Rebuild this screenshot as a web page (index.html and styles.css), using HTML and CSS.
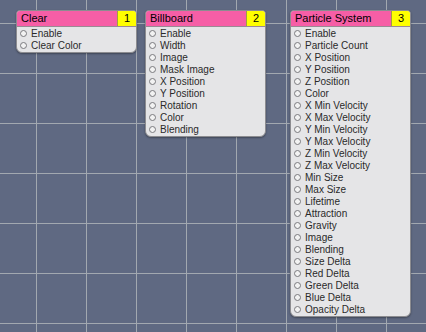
FILE: index.html
```html
<!DOCTYPE html>
<html lang="en">

<head>
    <meta charset="UTF-8">
    <meta name="viewport" content="width=device-width, initial-scale=1.0">
    <title>Patch Editor</title>
    <link rel="stylesheet" href="styles.css">
</head>

<body>
    <div class="canvas">
        <!-- Clear -->
        <div class="node node-clear">
            <div class="node-header">
                <span class="node-title">Clear</span>
                <span class="node-layer">1</span>
            </div>
            <ul class="ports">
                <li>Enable</li>
                <li>Clear Color</li>
            </ul>
        </div>

        <!-- Billboard -->
        <div class="node node-billboard">
            <div class="node-header">
                <span class="node-title">Billboard</span>
                <span class="node-layer">2</span>
            </div>
            <ul class="ports">
                <li>Enable</li>
                <li>Width</li>
                <li>Image</li>
                <li>Mask Image</li>
                <li>X Position</li>
                <li>Y Position</li>
                <li>Rotation</li>
                <li>Color</li>
                <li>Blending</li>
            </ul>
        </div>

        <!-- Particle System -->
        <div class="node node-particles">
            <div class="node-header">
                <span class="node-title">Particle System</span>
                <span class="node-layer">3</span>
            </div>
            <ul class="ports">
                <li>Enable</li>
                <li>Particle Count</li>
                <li>X Position</li>
                <li>Y Position</li>
                <li>Z Position</li>
                <li>Color</li>
                <li>X Min Velocity</li>
                <li>X Max Velocity</li>
                <li>Y Min Velocity</li>
                <li>Y Max Velocity</li>
                <li>Z Min Velocity</li>
                <li>Z Max Velocity</li>
                <li>Min Size</li>
                <li>Max Size</li>
                <li>Lifetime</li>
                <li>Attraction</li>
                <li>Gravity</li>
                <li>Image</li>
                <li>Blending</li>
                <li>Size Delta</li>
                <li>Red Delta</li>
                <li>Green Delta</li>
                <li>Blue Delta</li>
                <li>Opacity Delta</li>
            </ul>
        </div>
    </div>
</body>

</html>
```

FILE: styles.css
```css
body {
    margin: 0;
    padding: 0;
    font-family: "Liberation Sans", Arial, sans-serif;
}

.canvas {
    position: relative;
    width: 426px;
    height: 332px;
    overflow: hidden;
    background-color: #5f6982;
    background-image:
        linear-gradient(to right, #a2a8b0 1px, transparent 1px),
        linear-gradient(to bottom, #a2a8b0 1px, transparent 1px);
    background-size: 50px 50px;
    background-position: 36px 23px;
}

/* nodes sit on the free canvas */
.node {
    position: absolute;
    top: 10px;
    width: 119px;
    background-color: #e5e5e7;
    border: 1px solid #8c8c90;
    border-radius: 4px 4px 6px 6px;
    box-shadow: 0 1px 2px rgba(0, 0, 0, 0.35);
    overflow: hidden;
}

.node-clear {
    left: 16px;
}

.node-billboard {
    left: 145px;
}

.node-particles {
    left: 290px;
}

.node-header {
    display: flex;
    height: 15px;
    border-bottom: 1px solid #9a8a94;
}

.node-title {
    flex: 1;
    background-color: #f65ea6;
    color: #000;
    font-size: 11px;
    line-height: 15px;
    padding-left: 4px;
}

.node-layer {
    width: 18px;
    background-color: #ffff00;
    border-left: 1px solid #a0a040;
    color: #000;
    font-size: 11px;
    line-height: 15px;
    text-align: center;
}

.ports {
    list-style: none;
    margin: 0;
    padding: 0 0 1px 0;
}

.ports li {
    display: flex;
    align-items: center;
    height: 12px;
    padding-left: 3px;
    font-size: 10px;
    color: #2a2a2a;
}

.ports li::before {
    content: "";
    width: 5px;
    height: 5px;
    margin-right: 4px;
    border: 1px solid #7a7a7e;
    border-radius: 50%;
    background-color: #f2f2f2;
}
```
